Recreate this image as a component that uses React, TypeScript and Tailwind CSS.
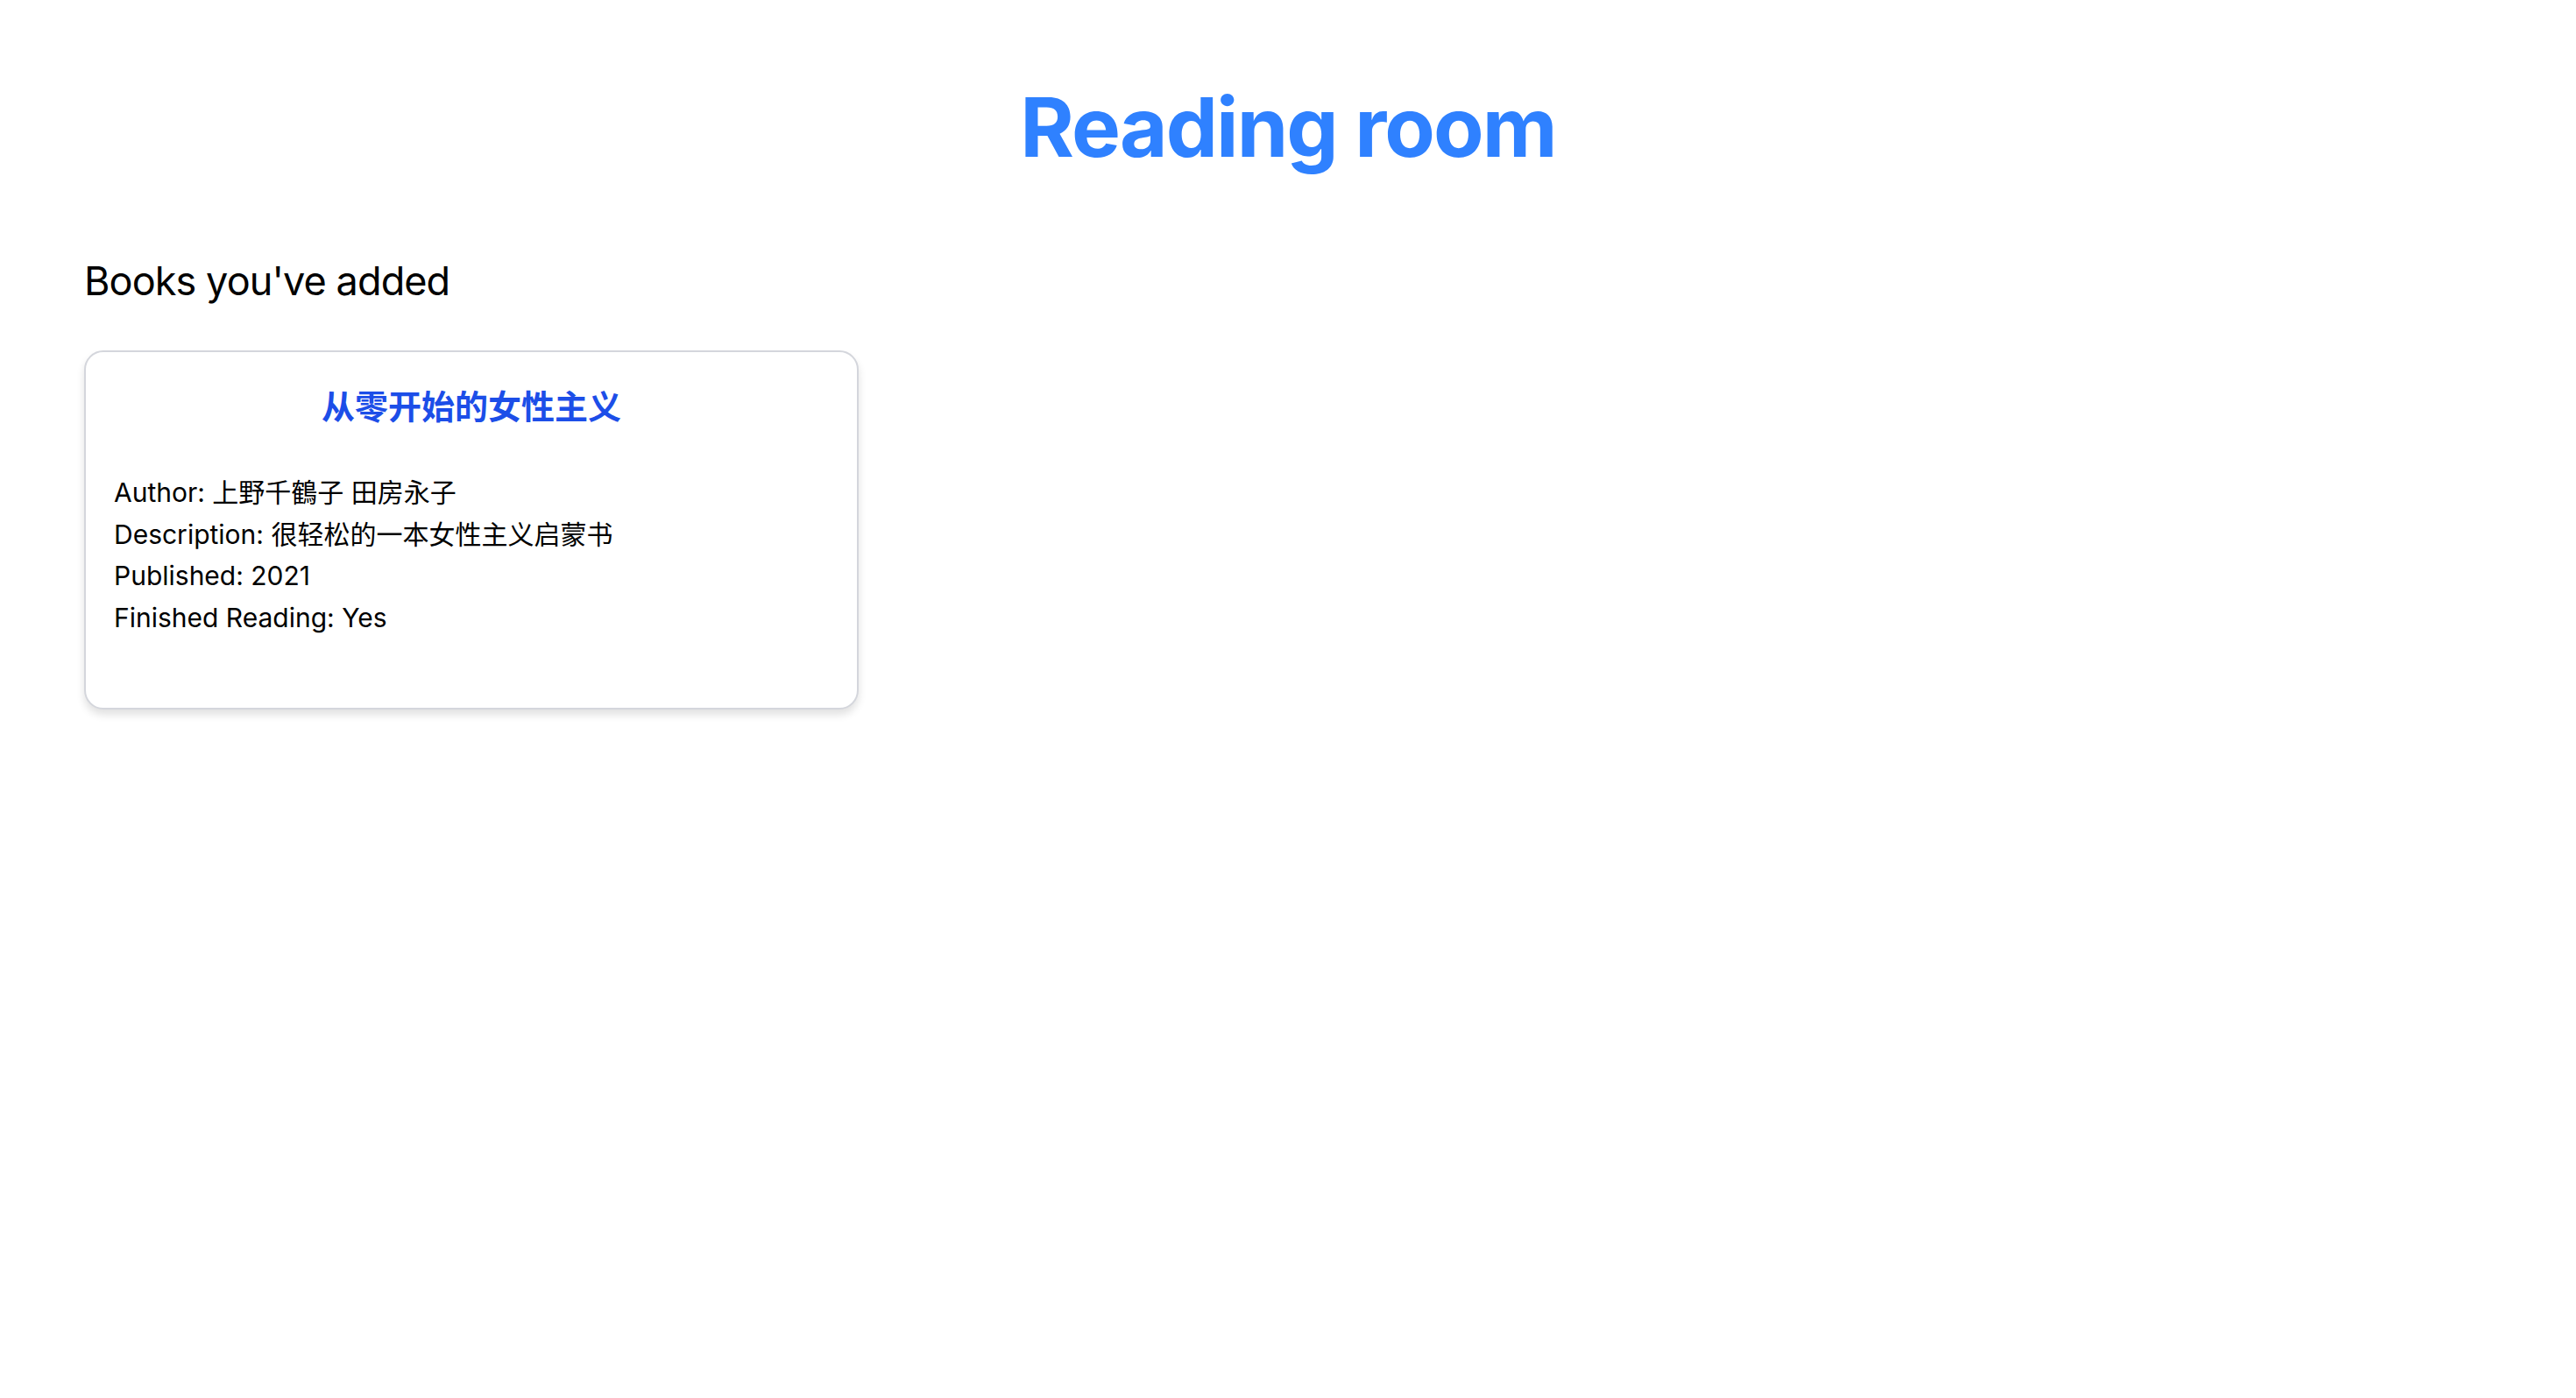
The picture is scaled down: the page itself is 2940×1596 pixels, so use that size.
const book = {
  title: '从零开始的女性主义',
  author: '上野千鶴子 田房永子',
  description: '很轻松的一本女性主义启蒙书',
  published: 2021,
  finished: true,
};

export default function App() {
  return (
    <div
      className="min-h-screen bg-white px-[96px] text-black"
      style={{ fontFamily: 'Inter, "Noto Sans CJK SC", sans-serif' }}
    >
      {/* Header */}
      <h1 className="pt-[98px] text-center text-[94px] leading-none font-bold tracking-[-0.02em] text-[#2f81ff]">
        Reading room
      </h1>

      <h2 className="mt-[106px] text-[45px] leading-none font-normal tracking-[-0.02em]">Books you've added</h2>

      {/* Book card */}
      <div className="mt-[57px] w-[884px] h-[410px] rounded-[22px] border-2 border-[#d4d6dc] bg-white px-[32px] pt-[43px] shadow-[0_6px_10px_rgba(0,0,0,0.12)]">
        <h3 className="text-center text-[38px] leading-none font-semibold text-[#1c4ee8]">
          {book.title}
        </h3>
        <div className="mt-[56px] text-[30px] leading-[47.5px]">
          <p>Author: {book.author}</p>
          <p>Description: {book.description}</p>
          <p>Published: {book.published}</p>
          <p>Finished Reading: {book.finished ? 'Yes' : 'No'}</p>
        </div>
      </div>
    </div>
  );
}
